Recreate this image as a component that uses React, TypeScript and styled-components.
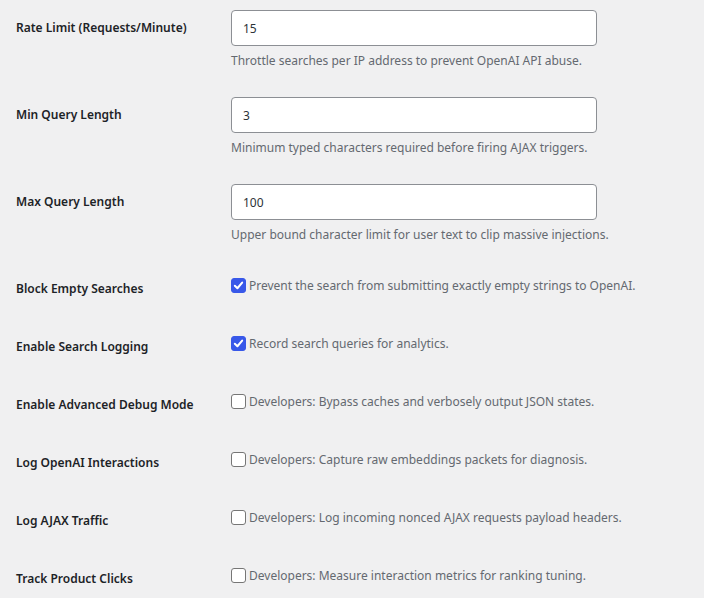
import styled, { createGlobalStyle } from "styled-components";

const GlobalStyle = createGlobalStyle`
  html, body {
    margin: 0;
    padding: 0;
    background: #f0f0f1;
  }
  body {
    font-family: "Noto Sans", "Open Sans", sans-serif;
    font-size: 12px;
    color: #1d2327;
  }
`;

const FormTable = styled.div`
  display: grid;
  grid-template-columns: 221px 1fr;
  margin-top: -5px;
`;

const Th = styled.div`
  padding: 24px 10px 17px 16px;
  font-weight: 600;
  font-size: 12px;
  line-height: 17px;
  color: #1d2327;
`;

const Td = styled.div<{ $check?: boolean }>`
  padding: ${(p) => (p.$check ? "21px 10px 20px" : "15px 10px 13px")};
`;

const TextInput = styled.input`
  box-sizing: border-box;
  display: block;
  width: 366px;
  height: 36px;
  margin: 0;
  padding: 0 11px;
  border: 1px solid #8c8f94;
  border-radius: 4px;
  background: #fff;
  font-family: inherit;
  font-size: 12px;
  color: #2c3338;
  outline: none;
`;

const Description = styled.p`
  margin: 6px 0 0;
  font-size: 12px;
  line-height: 17px;
  color: #646970;
`;

const CheckLabel = styled.label`
  display: flex;
  align-items: center;
  gap: 3px;
  font-size: 12px;
  line-height: 17px;
  color: #646970;
`;

const Box = styled.span<{ $on: boolean }>`
  box-sizing: border-box;
  flex: none;
  width: 15px;
  height: 15px;
  border-radius: 3px;
  border: 1px solid ${(p) => (p.$on ? "#3858e9" : "#767676")};
  background: ${(p) => (p.$on ? "#3858e9" : "#fff")};
  display: flex;
  align-items: center;
  justify-content: center;
`;

type Field =
  | { kind: "text"; label: string; value: string; desc: string }
  | { kind: "check"; label: string; on: boolean; desc: string };

const fields: Field[] = [
  {
    kind: "text",
    label: "Rate Limit (Requests/Minute)",
    value: "15",
    desc: "Throttle searches per IP address to prevent OpenAI API abuse.",
  },
  {
    kind: "text",
    label: "Min Query Length",
    value: "3",
    desc: "Minimum typed characters required before firing AJAX triggers.",
  },
  {
    kind: "text",
    label: "Max Query Length",
    value: "100",
    desc: "Upper bound character limit for user text to clip massive injections.",
  },
  {
    kind: "check",
    label: "Block Empty Searches",
    on: true,
    desc: "Prevent the search from submitting exactly empty strings to OpenAI.",
  },
  {
    kind: "check",
    label: "Enable Search Logging",
    on: true,
    desc: "Record search queries for analytics.",
  },
  {
    kind: "check",
    label: "Enable Advanced Debug Mode",
    on: false,
    desc: "Developers: Bypass caches and verbosely output JSON states.",
  },
  {
    kind: "check",
    label: "Log OpenAI Interactions",
    on: false,
    desc: "Developers: Capture raw embeddings packets for diagnosis.",
  },
  {
    kind: "check",
    label: "Log AJAX Traffic",
    on: false,
    desc: "Developers: Log incoming nonced AJAX requests payload headers.",
  },
  {
    kind: "check",
    label: "Track Product Clicks",
    on: false,
    desc: "Developers: Measure interaction metrics for ranking tuning.",
  },
];

function Checkbox({ on }: { on: boolean }) {
  return (
    <Box $on={on}>
      {on && (
        <svg width="11" height="11" viewBox="0 0 12 12">
          <path
            d="M2 6.3 L4.8 9 L10 2.8"
            fill="none"
            stroke="#fff"
            strokeWidth="2.2"
            strokeLinecap="round"
            strokeLinejoin="round"
          />
        </svg>
      )}
    </Box>
  );
}

export default function App() {
  return (
    <>
      <GlobalStyle />
      <FormTable>
        {fields.map((f) => [
          <Th key={f.label + "-th"}>{f.label}</Th>,
          f.kind === "text" ? (
            <Td key={f.label + "-td"}>
              <TextInput type="text" defaultValue={f.value} />
              <Description>{f.desc}</Description>
            </Td>
          ) : (
            <Td key={f.label + "-td"} $check>
              <CheckLabel>
                <Checkbox on={f.on} />
                {f.desc}
              </CheckLabel>
            </Td>
          ),
        ])}
      </FormTable>
    </>
  );
}
